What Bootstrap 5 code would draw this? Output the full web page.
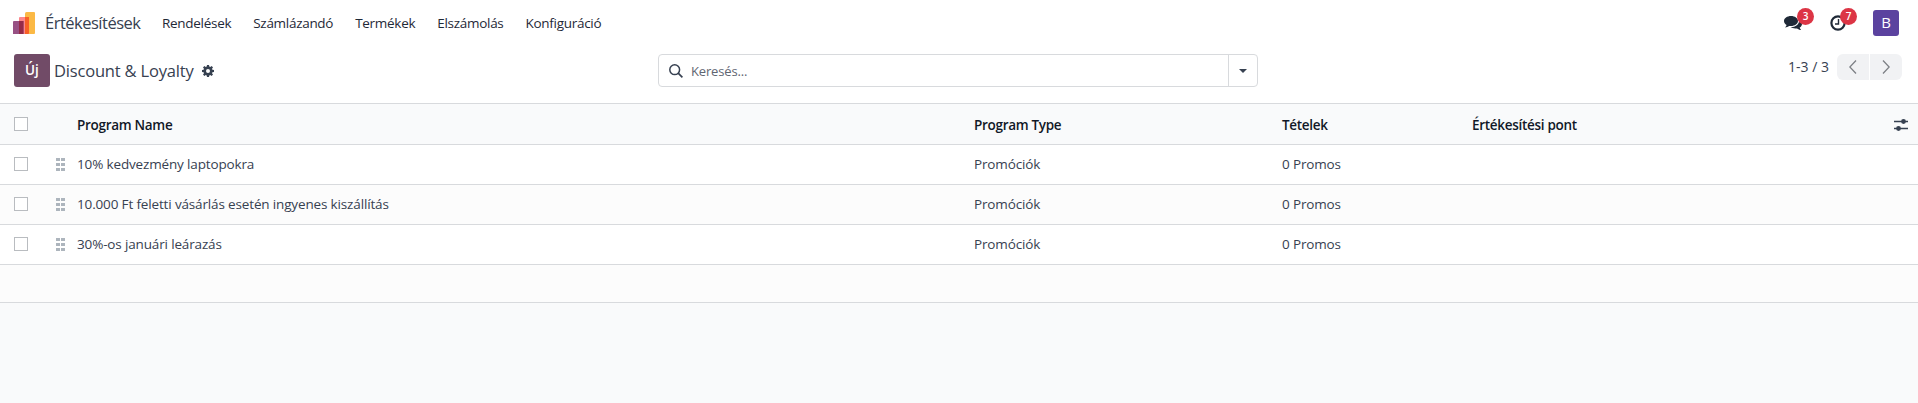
<!DOCTYPE html>
<html lang="hu">
<head>
<meta charset="utf-8">
<title>Discount &amp; Loyalty</title>
<link href="https://cdn.jsdelivr.net/npm/bootstrap@5.3.0/dist/css/bootstrap.min.css" rel="stylesheet">
<style>
body{font-family:"Open Sans","Noto Sans",sans-serif;font-size:13.5px;line-height:20px;color:#374151;background:#f9fafb;letter-spacing:-.15px;overflow:hidden}
.topbar{height:46px;padding:0 19px 0 13px}
.brand-name{font-size:16.5px;letter-spacing:-.5px;color:#374151;margin-left:10px;width:117px;white-space:nowrap}
.menu{margin-left:-11px;letter-spacing:-.29px}
.menu a{color:#1f2937;padding:0 11px;text-decoration:none;white-space:nowrap}
.counter{position:absolute;top:-7px;left:13px;width:17px;height:17px;font-size:10px;line-height:17px;padding:0;letter-spacing:0;font-weight:600}
.tray{width:46px;height:16px;margin-top:-1px}
.tray.activity{width:43px}
.activity .counter{left:10px}
.avatar{width:26px;height:26px;background:#5b429f;color:#fff;border-radius:3px;font-size:15px;line-height:25px}
.panel{height:58px;padding:8px 16px 0 14px;border-bottom:1px solid #d8dadd}
.btn-new,.btn-new:hover{width:36px;height:33px;background:#714b67;color:#fff;border:0;border-radius:3px;font-weight:600;font-size:13.5px;padding:0;line-height:33px}
.title{font-size:16.5px;letter-spacing:-.18px;margin-left:4px;width:148px;white-space:nowrap}
.side{width:644px}
.search{width:600px;height:33px;border:1px solid #d8dadd;border-radius:4px}
.search .lens{margin-left:10px}
.search .toggle{width:29px;border-left:1px solid #d8dadd}
.placeholder-text{color:#5f6672;margin-left:8px;font-size:13px}
.pager span{font-size:14px;margin-right:8px;letter-spacing:0}
.pg{width:32px;height:26px;background:#f1f2f4;color:#7c7f84}
.list{table-layout:fixed;margin:0;color:#374151;border-color:#d8dadd;--bs-table-bg:transparent;--bs-table-color:#374151}
.list td,.list th{padding:0;height:40px;vertical-align:middle;border-bottom:1px solid #d8dadd;white-space:nowrap}
.list thead th{color:#111827;font-weight:600;letter-spacing:-.3px;background:#f9fafb;padding-top:2px}
.list tbody tr{background:#fff}
.list tbody tr:nth-child(even){background:#fcfcfc}
.list tbody tr.filler td{height:38px}
.check{display:block;width:14px;height:14px;margin:0 0 0 14px;border:1px solid #b9bcc0;border-radius:0!important;background:#fff}
thead .check{margin-top:-2px}
svg{display:block;flex:none}
</style>
<script src="https://cdn.jsdelivr.net/npm/bootstrap@5.3.0/dist/js/bootstrap.bundle.min.js"></script>
</head>
<body>
<header class="topbar bg-white d-flex align-items-center">
  <svg width="22" height="22" viewBox="0 0 22 22"><path d="M13.500 0H21a1 1 0 0 1 1 1v20a1 1 0 0 1-1 1h-9V1.500A1.500 1.500 0 0 1 13.500 0Z" fill="#fbb945"/><path d="M7 5h9v16a1 1 0 0 1-1 1H6V6a1 1 0 0 1 1-1Z" fill="#fc868b"/><path d="M12 5h4v16a1 1 0 0 1-1 1h-3Z" fill="#f86126"/><path d="M1 9h9.500v13H0V10a1 1 0 0 1 1-1Z" fill="#985184"/><path d="M6 9h4.500v13H6Z" fill="#962b48"/></svg>
  <span class="brand-name">Értékesítések</span>
  <nav class="menu d-flex flex-grow-1">
    <a href="#">Rendelések</a><a href="#">Számlázandó</a><a href="#">Termékek</a><a href="#">Elszámolás</a><a href="#">Konfiguráció</a>
  </nav>
  <div class="tray position-relative"><svg width="18" height="16" viewBox="0 0 18 16" fill="#1f2937"><path d="M7 1c3.900 0 7 2.200 7 5s-3.100 5-7 5c-.6 0-1.200 0-1.700-.1C4 11.800 2.600 12.300 1 12.500c.8-.8 1.400-1.500 1.600-2.500C1 9.100 0 7.600 0 6c0-2.800 3.100-5 7-5Z"/><path d="M15.100 5c1.700.8 2.900 2.200 2.900 3.900 0 1.500-.9 2.800-2.300 3.700.2 1 .7 1.700 1.400 2.400-1.600-.1-3-.7-4.100-1.600-2.400.4-4.900-.1-6.500-1.300C11.300 12.200 15.500 9.600 15.100 5Z"/></svg><span class="counter badge rounded-pill text-bg-danger">3</span></div>
  <div class="tray activity position-relative"><svg width="16" height="16" viewBox="0 0 16 16" fill="none" stroke="#1f2937"><circle cx="8" cy="8" r="6.600" stroke-width="2.200"/><path d="M8.500 4v5H5" stroke-width="1.400"/></svg><span class="counter badge rounded-pill text-bg-danger">7</span></div>
  <div class="avatar text-center">B</div>
</header>
<section class="panel bg-white d-flex align-items-start">
  <div class="side d-flex align-items-center">
    <button class="btn btn-new">Új</button><span class="title">Discount &amp; Loyalty</span>
    <svg width="12" height="12" viewBox="0 0 12 12"><path fill="#374151" fill-rule="evenodd" d="M5 0h2l.3 1.600 1 .4L9.700 1.100 11 2.400 10 3.700l.4 1L12 5v2l-1.600.3-.4 1 1 1.300L9.600 11l-1.300-1-1 .4L7 12H5l-.3-1.600-1-.4-1.300 1L1 9.600l1-1.300-.4-1L0 7V5l1.600-.3.4-1-1-1.300L2.400 1l1.300 1 1-.4ZM6 4a2 2 0 1 0 0 4 2 2 0 0 0 0-4Z"/></svg>
  </div>
  <div class="search d-flex align-items-center">
    <svg class="lens" width="14" height="14" viewBox="0 0 14 14" fill="none" stroke="#374151"><circle cx="5.700" cy="5.700" r="4.900" stroke-width="1.500"/><path d="m9.200 9.200 4.200 4.200" stroke-width="1.700"/></svg>
    <span class="placeholder-text flex-grow-1">Keresés...</span>
    <span class="toggle h-100 d-flex align-items-center justify-content-center"><svg width="8" height="4" viewBox="0 0 8 4"><path d="M0 0h8L4 4Z" fill="#374151"/></svg></span>
  </div>
  <div class="pager d-flex align-items-center ms-auto">
    <span>1-3 / 3</span>
    <div class="pg rounded-start d-flex align-items-center justify-content-center" style="margin-right:1px"><svg width="8" height="14" viewBox="0 0 8 14" fill="none" stroke="currentColor" stroke-width="1.300"><path d="M7 .5.8 7 7 13.500"/></svg></div>
    <div class="pg rounded-end d-flex align-items-center justify-content-center"><svg width="8" height="14" viewBox="0 0 8 14" fill="none" stroke="currentColor" stroke-width="1.300"><path d="M1 .5 7.200 7 1 13.500"/></svg></div>
  </div>
</section>
<table class="table list">
  <colgroup><col style="width:56px"><col style="width:21px"><col style="width:897px"><col style="width:308px"><col style="width:190px"><col><col style="width:24px"></colgroup>
  <thead><tr><th><input class="form-check-input check" type="checkbox"></th><th></th><th>Program Name</th><th>Program Type</th><th>Tételek</th><th>Értékesítési pont</th><th><svg width="14" height="12" viewBox="0 0 14 12" stroke="#374151" fill="#374151"><path d="M0 2.500h14M0 9.500h14" stroke-width="1.300"/><circle cx="9.500" cy="2.500" r="2.400" stroke="none"/><circle cx="4.500" cy="9.500" r="2.400" stroke="none"/></svg></th></tr></thead>
  <tbody id="rows"></tbody>
</table>
<script>
const programs = ["10% kedvezmény laptopokra", "10.000 Ft feletti vásárlás esetén ingyenes kiszállítás", "30%-os januári leárazás"];
const grip = '<svg width="9" height="13" viewBox="0 0 9 13" fill="#adb5bd"><path d="M0 0h4v3H0zM5 0h4v3H5zM0 5h4v3H0zM5 5h4v3H5zM0 10h4v3H0zM5 10h4v3H5z"/></svg>';
document.getElementById("rows").innerHTML = programs.map(name =>
  `<tr><td><input class="form-check-input check" type="checkbox"></td><td>${grip}</td><td>${name}</td><td>Promóciók</td><td>0 Promos</td><td></td><td></td></tr>`
).join("") + '<tr class="filler"><td colspan="7"></td></tr>';
</script>
</body>
</html>
